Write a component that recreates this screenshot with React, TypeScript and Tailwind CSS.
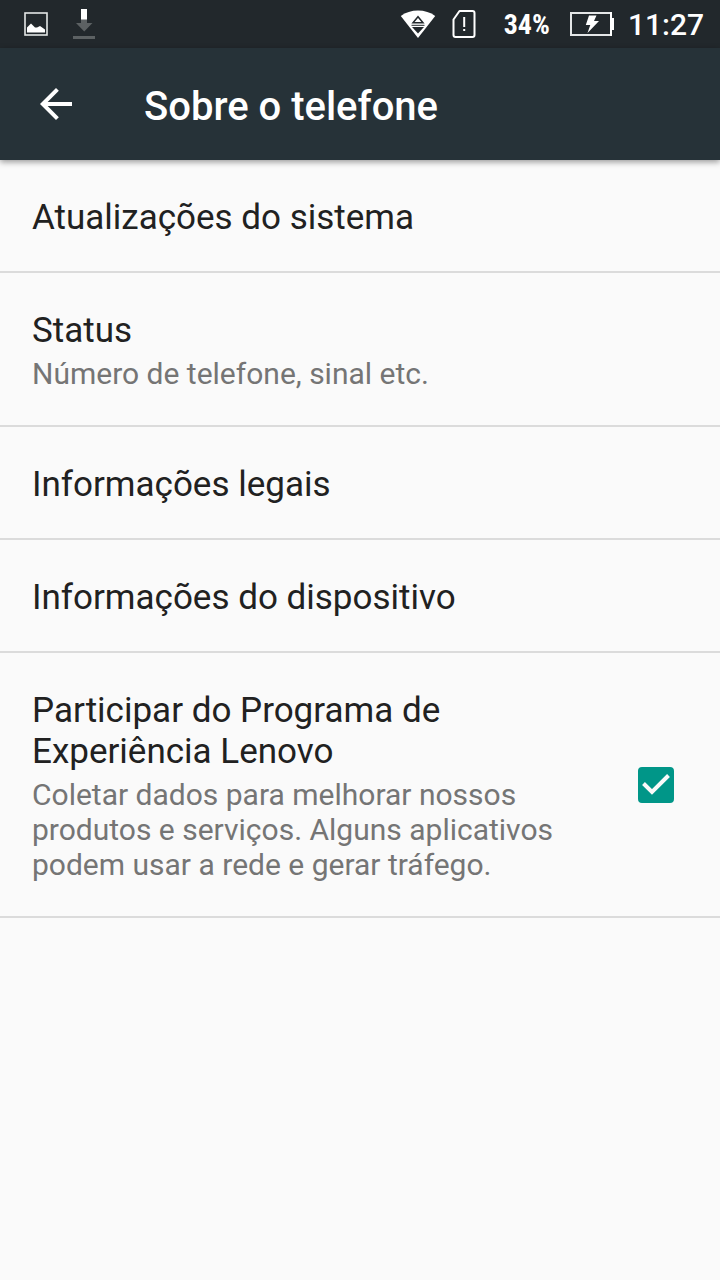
import { useState } from "react";

interface SettingItem {
  title: string;
  summary?: string;
}

const items: SettingItem[] = [
  { title: "Atualizações do sistema" },
  { title: "Status", summary: "Número de telefone, sinal etc." },
  { title: "Informações legais" },
  { title: "Informações do dispositivo" },
];

function StatusBar() {
  return (
    <div className="flex h-12 items-center justify-between bg-[#22282c] pl-6 pr-4 text-white">
      <div className="flex items-center gap-6">
        <svg width="24" height="24" viewBox="0 0 24 24" aria-label="Imagem">
          <rect x="1" y="1" width="22" height="22" fill="none" stroke="#e4e6e7" strokeWidth="1.6" />
          <path d="M3 20.500v-5l4-4 4 4h2l3-1.500 5 3.500v3z" fill="#fff" />
        </svg>
        <svg width="24" height="32" viewBox="0 0 24 32" aria-label="Download">
          <path d="M4 15h5v-4h6v4h5.500l-8.250 8.500z" fill="#5c6163" />
          <path d="M9 1h6v10.500h-6z" fill="#fff" />
          <path d="M1 28h22v3H1z" fill="#5c6163" />
        </svg>
      </div>
      <div className="flex items-center">
        <svg width="36" height="30" viewBox="0 0 36 30" aria-label="Wi-Fi">
          <path d="M.8 7C10-.4 26-.4 35.200 7L18 29z" fill="#fff" />
          <path d="M13 13.700l5-6 5 6z" fill="none" stroke="#22282c" strokeWidth="1.500" />
          <path d="M11.500 16.300h13" fill="none" stroke="#22282c" strokeWidth="1" />
          <path d="M12 18h12l-6 6.500z" fill="#22282c" />
        </svg>
        <svg width="24" height="30" viewBox="0 0 24 30" className="ml-4" aria-label="Sem chip">
          <path d="M7.500 2H20.500a2 2 0 0 1 2 2V26a2 2 0 0 1-2 2H3.500a2 2 0 0 1-2-2V10.500z" fill="none" stroke="#fff" strokeWidth="2" strokeLinejoin="round" />
          <path d="M11.200 8h2v10h-2zM11.200 20h2v2h-2z" fill="#fff" />
        </svg>
        <span className="ml-7 pt-px font-['Roboto_Condensed','Roboto',sans-serif] text-[28px] font-bold leading-8">34%</span>
        <svg width="46" height="26" viewBox="0 0 46 26" className="ml-5" aria-label="Bateria carregando">
          <rect x="1" y="2" width="40" height="22" fill="none" stroke="#e4e6e7" strokeWidth="2" />
          <path d="M40 1h2v24h-2zM41 7h3v12h-3z" fill="#fff" />
          <path d="M19 4.500h7.500l-2.500 5.500h5L17.500 22l2.800-8h-4.500z" fill="#fff" />
        </svg>
        <span className="ml-3 pt-px text-[30px] font-medium leading-8">11:27</span>
      </div>
    </div>
  );
}

function AppBar() {
  return (
    <header className="relative flex h-28 items-center bg-[#263238] px-8 text-white shadow-[0_2px_6px_rgba(0,0,0,0.4)]">
      <button type="button" aria-label="Voltar" className="flex size-12 items-center justify-center">
        <svg width="48" height="48" viewBox="0 0 24 24" fill="#fff">
          <path d="M20 11H7.830l5.590-5.590L12 4l-8 8 8 8 1.410-1.410L7.830 13H20v-2z" />
        </svg>
      </button>
      <h1 className="ml-16 pt-1.5 text-[40px] font-medium leading-12">Sobre o telefone</h1>
    </header>
  );
}

function SettingText({ title, summary }: SettingItem) {
  return (
    <span className={`block pt-[37px] ${summary ? "pb-[34px]" : "pb-[33px]"}`}>
      <span className="block text-[35px] leading-[41px] text-[#212121]">{title}</span>
      {summary && <span className="block pt-[5px] text-[30px] leading-[35px] text-[#757575]">{summary}</span>}
    </span>
  );
}

export default function App() {
  const [joined, setJoined] = useState(true);

  return (
    <div className="min-h-screen bg-[#fafafa] font-['Roboto',sans-serif]">
      <StatusBar />
      <AppBar />
      <main>
        <ul>
          {items.map((item) => (
            <li key={item.title} className="border-b-2 border-[#dbdbdb]">
              <button type="button" className="flex w-full items-center px-8 text-left">
                <SettingText title={item.title} summary={item.summary} />
              </button>
            </li>
          ))}
          <li className="border-b-2 border-[#dbdbdb]">
            <label className="flex items-center justify-between px-8">
              <span className="max-w-[540px]">
                <SettingText
                  title="Participar do Programa de Experiência Lenovo"
                  summary="Coletar dados para melhorar nossos produtos e serviços. Alguns aplicativos podem usar a rede e gerar tráfego."
                />
              </span>
              <span className="mr-3.5 grid size-9 shrink-0">
                <input
                  type="checkbox"
                  checked={joined}
                  onChange={(e) => setJoined(e.target.checked)}
                  className="peer col-start-1 row-start-1 size-9 appearance-none rounded-sm border-4 border-[#757575] checked:border-[#009688] checked:bg-[#009688]"
                />
                <svg
                  viewBox="0 0 36 36"
                  className="pointer-events-none invisible col-start-1 row-start-1 size-9 peer-checked:visible"
                >
                  <path d="M5.500 16.500l8.500 8.500L30.500 8.500" fill="none" stroke="#fafafa" strokeWidth="4" />
                </svg>
              </span>
            </label>
          </li>
        </ul>
      </main>
    </div>
  );
}
